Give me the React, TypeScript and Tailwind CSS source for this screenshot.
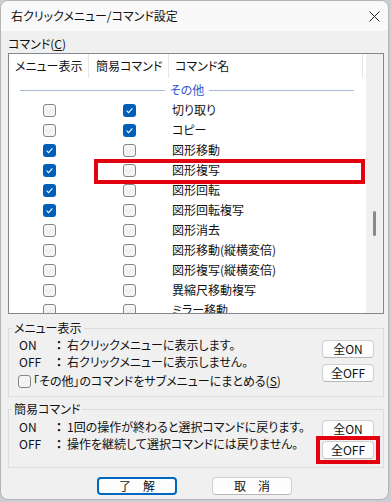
import React from "react";

type Row = { name: string; menu: boolean; quick: boolean; marked?: boolean };

const ROWS: Row[] = [
  { name: "切り取り", menu: false, quick: true },
  { name: "コピー", menu: false, quick: true },
  { name: "図形移動", menu: true, quick: false },
  { name: "図形複写", menu: true, quick: false, marked: true },
  { name: "図形回転", menu: true, quick: false },
  { name: "図形回転複写", menu: true, quick: false },
  { name: "図形消去", menu: false, quick: false },
  { name: "図形移動(縦横変倍)", menu: false, quick: false },
  { name: "図形複写(縦横変倍)", menu: false, quick: false },
  { name: "異縮尺移動複写", menu: false, quick: false },
  { name: "ミラー移動", menu: false, quick: false },
];

function CheckBox({ on }: { on: boolean }) {
  if (on) {
    return (
      <span className="w-[13px] h-[13px] rounded-[3px] bg-[#005fb8] flex items-center justify-center">
        <svg width="9" height="9" viewBox="0 0 9 9">
          <path d="M1.6 4.7 L3.6 6.6 L7.4 2.4" stroke="#ffffff" strokeWidth="1.1" fill="none" />
        </svg>
      </span>
    );
  }
  return (
    <span className="w-[13px] h-[13px] rounded-[3px] border border-[#868686] bg-[#f4f4f4] flex items-center justify-center">
      <svg width="9" height="9" viewBox="0 0 9 9">
        <path d="M1.6 4.7 L3.6 6.6 L7.4 2.4" stroke="#e6e6e6" strokeWidth="1" fill="none" />
      </svg>
    </span>
  );
}

function Button({ label, wide, primary }: { label: string; wide?: boolean; primary?: boolean }) {
  return (
    <button
      className={
        primary
          ? "w-[80px] h-[18px] rounded-[4px] border-2 border-[#0067c0] bg-[#fdfdfd] text-[12px] leading-[14px] flex items-center justify-center"
          : wide
          ? "w-[80px] h-[18px] rounded-[4px] border border-[#cfcfcf] border-b-[#b8b8b8] bg-[#fdfdfd] text-[12px] leading-[16px] flex items-center justify-center"
          : "w-[52px] h-[18px] rounded-[4px] border border-[#cfcfcf] border-b-[#b8b8b8] bg-[#fdfdfd] text-[12px] leading-[16px] flex items-center justify-center"
      }
    >
      {label}
    </button>
  );
}

function InfoLine({ tag, text }: { tag: string; text: string }) {
  return (
    <div className="flex items-center h-[17px] leading-[17px]">
      <span className="w-[34px]">{tag}</span>
      <span className="w-[12px] text-center font-bold">：</span>
      <span className="ml-[2px]">{text}</span>
    </div>
  );
}

export default function App() {
  return (
    <div className="w-[391px] h-[502px] bg-[#c9ced4] overflow-hidden font-['Noto_Sans_CJK_JP','Liberation_Sans',sans-serif] [font-feature-settings:'palt'] text-[12px] text-[#111]">
      <div className="w-[389px] h-[500px] bg-[#f0f0f0] border border-[#b4b4b4] rounded-lg overflow-hidden flex flex-col">
        {/* title bar */}
        <div className="h-[30px] shrink-0 bg-[#f9f9f9] flex items-center justify-between pl-[10px] pr-[8px]">
          <span className="text-[12px] leading-[16px]">右クリックメニュー/コマンド設定</span>
          <svg width="11" height="11" viewBox="0 0 11 11">
            <path d="M0.5 0.5 L10.5 10.5 M10.5 0.5 L0.5 10.5" stroke="#222" strokeWidth="1" />
          </svg>
        </div>

        <div className="pl-[7px] pr-[4px]">
          <div className="mt-[5px] h-[16px] leading-[16px]">
            コマンド(<span className="underline">C</span>)
          </div>

          {/* list */}
          <div className="mt-[1px] h-[261px] border border-[#828790] bg-white flex">
            <div className="flex-1 overflow-hidden">
              <div className="flex h-[24px]">
                <div className="w-[80px] border-r border-[#e5e5e5] pl-[6px] flex items-center">メニュー表示</div>
                <div className="w-[80px] border-r border-[#e5e5e5] pl-[7px] flex items-center">簡易コマンド</div>
                <div className="w-[194px] border-r border-[#e5e5e5] pl-[6px] flex items-center">コマンド名</div>
              </div>
              <div className="pt-[2px]">
                <div className="h-[20px] flex items-center pl-[11px] pr-[12px] gap-[5px]">
                  <span className="flex-1 h-px bg-[#a9b9d3]" />
                  <span className="text-[#2f55cc]">その他</span>
                  <span className="flex-1 h-px bg-[#a9b9d3]" />
                </div>
                {ROWS.map((r) => (
                  <div key={r.name} className="relative h-[20px] flex items-center">
                    <div className="w-[80px] flex justify-center">
                      <CheckBox on={r.menu} />
                    </div>
                    <div className="w-[80px] flex justify-center pl-[1px]">
                      <CheckBox on={r.quick} />
                    </div>
                    <div className="pl-[3px] whitespace-nowrap">{r.name}</div>
                    {r.marked && (
                      <span className="absolute left-[85px] -top-[1px] w-[271px] h-[25px] border-4 border-[#e3000f]" />
                    )}
                  </div>
                ))}
              </div>
            </div>
            <div className="w-[17px] bg-[#f0f0f0] flex justify-center pt-[157px]">
              <span className="w-[3px] h-[25px] rounded-full bg-[#8a8a8a]" />
            </div>
          </div>

          {/* menu display group */}
          <fieldset className="mt-[6px] border border-[#dcdcdc]">
            <legend className="ml-[3px] px-[2px] leading-[16px]">メニュー表示</legend>
            <div className="h-[60px] flex justify-between">
              <div className="pl-[10px]">
                <InfoLine tag="ON" text="右クリックメニューに表示します。" />
                <InfoLine tag="OFF" text="右クリックメニューに表示しません。" />
                <div className="mt-[3px] h-[16px] flex items-center gap-[2px] -ml-[1px]">
                  <CheckBox on={false} />
                  <span>「その他」のコマンドをサブメニューにまとめる(<span className="underline">S</span>)</span>
                </div>
              </div>
              <div className="pr-[9px] pt-[4px] flex flex-col gap-[6px]">
                <Button label="全ON" />
                <Button label="全OFF" />
              </div>
            </div>
          </fieldset>

          {/* quick command group */}
          <fieldset className="mt-[4px] border border-[#dcdcdc]">
            <legend className="ml-[3px] px-[2px] leading-[16px]">簡易コマンド</legend>
            <div className="h-[50px] flex justify-between">
              <div className="pl-[10px] pt-[1px]">
                <InfoLine tag="ON" text="1回の操作が終わると選択コマンドに戻ります。" />
                <InfoLine tag="OFF" text="操作を継続して選択コマンドには戻りません。" />
              </div>
              <div className="pr-[9px] pt-[3px] flex flex-col gap-[3px]">
                <Button label="全ON" />
                <div className="relative">
                  <Button label="全OFF" />
                  <span className="absolute -left-[6px] -right-[6px] -top-[5px] -bottom-[5px] border-4 border-[#e3000f]" />
                </div>
              </div>
            </div>
          </fieldset>
        </div>

        <div className="mt-[9px] flex justify-center gap-[35px]">
          <Button label="了　解" primary />
          <Button label="取　消" wide />
        </div>
      </div>
    </div>
  );
}
